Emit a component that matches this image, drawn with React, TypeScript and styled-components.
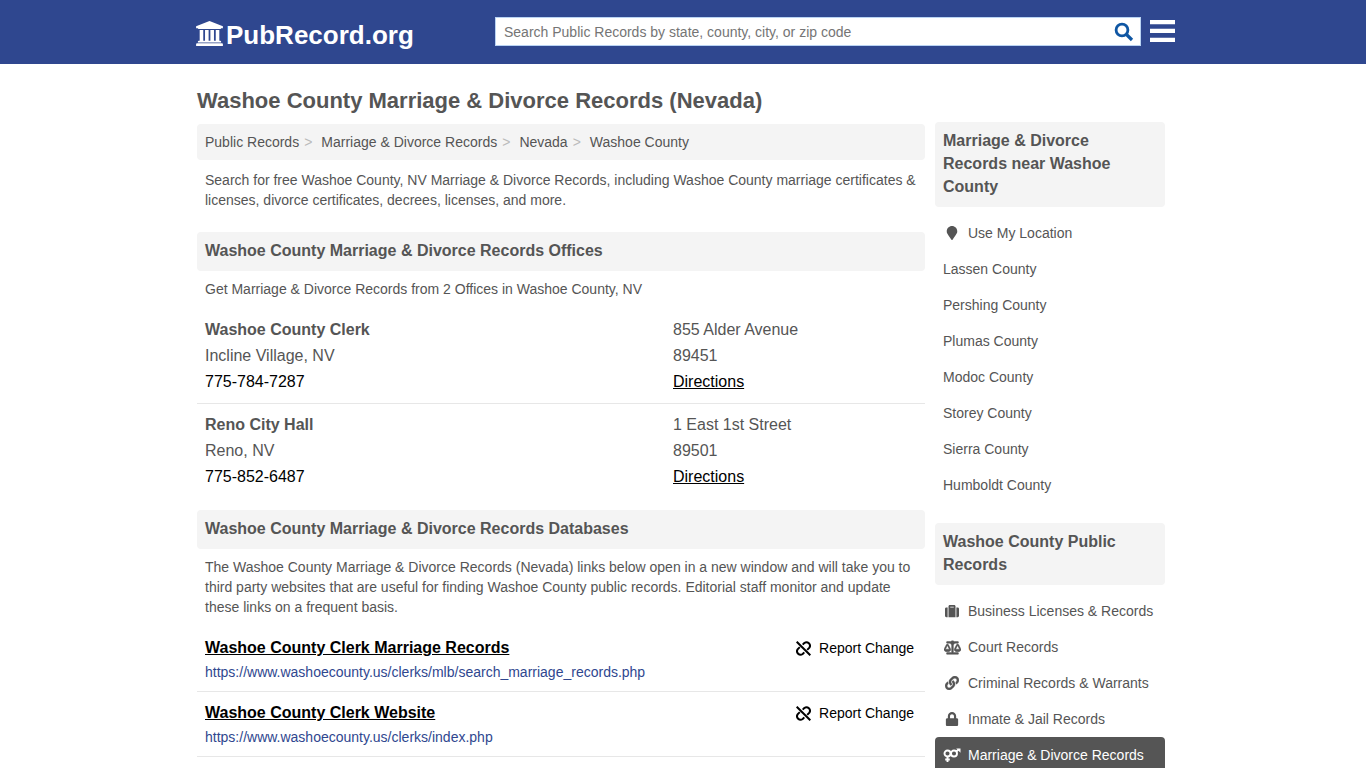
import React from "react";
import styled, { createGlobalStyle } from "styled-components";
import { FaBalanceScale, FaLink, FaLock, FaMapMarker, FaSuitcase } from "react-icons/fa";

const GlobalStyle = createGlobalStyle`
  *, *::before, *::after { box-sizing: border-box; }
  body {
    margin: 0;
    background: #fff;
    color: #555;
    font: 14px/20px "Liberation Sans", Arial, sans-serif;
  }
  h1, h2, h3, p, ul, ol { margin: 0; padding: 0; }
  ul, ol { list-style: none; }
  a { color: inherit; text-decoration: none; }
`;

const Header = styled.header`
  background: #2f478f;
`;

const HeaderInner = styled.div`
  display: flex;
  align-items: center;
  justify-content: space-between;
  max-width: 984px;
  height: 64px;
  margin: 0 auto;
  padding-left: 5px;
`;

const Logo = styled.a`
  display: flex;
  align-items: center;
  gap: 3px;
  padding-top: 6px;
  color: #fff;
  font-size: 26px;
  font-weight: bold;
  line-height: 32px;

  svg { margin-bottom: 4px; }
`;

const HeaderTools = styled.div`
  display: flex;
  align-items: center;
  flex: 0 1 680px;
  gap: 9px;
  padding-bottom: 2px;
`;

const SearchForm = styled.form`
  display: flex;
  flex: 1;
  height: 29px;
  background: #fff;
  border: 1px solid #b9d3f3;
`;

const SearchInput = styled.input`
  flex: 1;
  min-width: 0;
  padding: 2px 8px 0;
  border: 0;
  outline: 0;
  background: transparent;
  color: #555;
  font: inherit;

  &::placeholder { color: #757575; opacity: 1; }
`;

const IconButton = styled.button<{ $color: string }>`
  display: flex;
  align-items: center;
  padding: 0;
  border: 0;
  background: transparent;
  color: ${({ $color }) => $color};
  cursor: pointer;
`;

const SearchButton = styled(IconButton)`
  padding: 2px 6px 0;
`;

const Page = styled.div`
  display: flex;
  align-items: flex-start;
  gap: 10px;
  max-width: 972px;
  margin: 0 auto;
  padding: 22px 4px 0 0;
`;

const Main = styled.main`
  flex: 1;
  min-width: 0;
`;

const Sidebar = styled.aside`
  flex: 0 0 230px;
  padding-top: 36px;
`;

const Title = styled.h1`
  font-size: 22px;
  line-height: 30px;
  padding-bottom: 8px;
`;

const Breadcrumbs = styled.ol`
  display: flex;
  padding: 8px;
  border-radius: 4px;
  background: #f4f4f4;
`;

const Crumb = styled.li`
  & + &::before {
    content: ">";
    padding: 0 9px 0 5px;
    color: #bbb;
  }
`;

const Text = styled.p`
  padding: 8px 8px 10px;
`;

const Intro = styled(Text)`
  padding: 10px 8px 22px;
`;

const SectionTitle = styled.h2`
  padding: 8px 8px 10px;
  border-radius: 4px;
  background: #f4f4f4;
  font-size: 16px;
  line-height: 21px;
`;

const Section = styled.section`
  & + & { margin-top: 12px; }
`;

const Office = styled.li`
  display: grid;
  grid-template-columns: 1fr 244px;
  padding: 8px;
  border-bottom: 1px solid #e7e7e7;
  font-size: 16px;
  line-height: 26px;

  &:last-child { border-bottom: 0; }
`;

const OfficeColumn = styled.div`
  display: flex;
  flex-direction: column;
  align-items: flex-start;
`;

const OfficeName = styled.h3`
  font-size: 16px;
`;

const DarkLink = styled.a<{ $underline?: boolean }>`
  color: #000;
  text-decoration: ${({ $underline }) => ($underline ? "underline" : "none")};
`;

const Database = styled.li`
  display: flex;
  justify-content: space-between;
  padding: 8px 11px 6px 8px;
  border-bottom: 1px solid #e7e7e7;
  line-height: 25px;
`;

const DatabaseName = styled.h3`
  font-size: 16px;
  line-height: 25px;
`;

const DatabaseUrl = styled.a`
  color: #2f478f;
`;

const ReportLink = styled.a`
  display: flex;
  align-items: center;
  align-self: flex-start;
  gap: 8px;
  padding-top: 1px;
  color: #000;
`;

const SideSection = styled.section`
  & + & { margin-top: 20px; }
`;

const SideTitle = styled.h2`
  padding: 7px 8px 9px;
  border-radius: 4px;
  background: #f4f4f4;
  font-size: 16px;
  line-height: 23px;
`;

const SideList = styled.ul`
  padding-top: 8px;
`;

const SideLink = styled.a<{ $active?: boolean }>`
  display: flex;
  align-items: center;
  gap: 7px;
  padding: 8px;
  border-radius: 4px;
  background: ${({ $active }) => ($active ? "#555" : "transparent")};
  color: ${({ $active }) => ($active ? "#fff" : "inherit")};
`;

const SideIcon = styled.span`
  display: flex;
  justify-content: center;
  flex: 0 0 18px;
`;

const BankIcon = () => (
  <svg width="27" height="25" viewBox="0 0 1920 1792" fill="currentColor" aria-hidden="true">
    <path d="M960 0l960 384v128h-128q0 26-20.500 45t-48.500 19h-1526q-28 0-48.500-19t-20.500-45h-128v-128zM256 640h256v768h128v-768h256v768h128v-768h256v768h128v-768h256v768h59q28 0 48.500 19t20.500 45v64h-1664v-64q0-26 20.500-45t48.500-19h59v-768zM1851 1600q28 0 48.500 19t20.500 45v128h-1920v-128q0-26 20.500-45t48.500-19h1782z" />
  </svg>
);

const SearchIcon = () => (
  <svg width="20" height="20" viewBox="0 0 20 20" fill="none" stroke="currentColor" strokeWidth="2.8" aria-hidden="true">
    <circle cx="8" cy="8" r="5.9" />
    <path d="M12 12l6 6" strokeWidth="3.2" />
  </svg>
);

const MenuIcon = () => (
  <svg width="25" height="22" viewBox="0 0 25 22" fill="currentColor" aria-hidden="true">
    <path d="M0 0h25v4.300H0zM0 8.800h25v4.300H0zM0 17.700h25v4.300H0z" />
  </svg>
);

const BrokenLinkIcon = () => (
  <svg width="15" height="15" viewBox="0 0 15 15" fill="none" stroke="currentColor" strokeWidth="2" aria-hidden="true">
    <path d="M0.700 0.700L14.300 14.300" />
    <path d="M6.700 3.600L8.300 2A3.500 3.500 0 0 1 13.200 6.900L11.200 8.900M8.300 11.400L6.700 13A3.500 3.500 0 0 1 1.800 8.100L3.800 6.100" />
  </svg>
);

const VenusMarsIcon = () => (
  <svg width="18" height="15" viewBox="0 0 18 15" fill="none" stroke="currentColor" strokeWidth="1.900" aria-hidden="true">
    <circle cx="4.500" cy="5.500" r="3" />
    <circle cx="11" cy="5.500" r="3" />
    <path d="M4.500 8.500V14M2.200 11.500h4.600M13.100 3.400L16 1.500" />
    <path d="M13.200 0.400H17.500V4.700z" fill="currentColor" stroke="none" />
  </svg>
);

const crumbs = ["Public Records", "Marriage & Divorce Records", "Nevada", "Washoe County"];

const offices = [
  { name: "Washoe County Clerk", city: "Incline Village, NV", phone: "775-784-7287", street: "855 Alder Avenue", zip: "89451" },
  { name: "Reno City Hall", city: "Reno, NV", phone: "775-852-6487", street: "1 East 1st Street", zip: "89501" },
];

const databases = [
  { name: "Washoe County Clerk Marriage Records", url: "https://www.washoecounty.us/clerks/mlb/search_marriage_records.php" },
  { name: "Washoe County Clerk Website", url: "https://www.washoecounty.us/clerks/index.php" },
];

interface SideItem {
  label: string;
  icon?: React.ReactNode;
  active?: boolean;
}

const nearby: SideItem[] = [
  { label: "Use My Location", icon: <FaMapMarker size={14} /> },
  { label: "Lassen County" },
  { label: "Pershing County" },
  { label: "Plumas County" },
  { label: "Modoc County" },
  { label: "Storey County" },
  { label: "Sierra County" },
  { label: "Humboldt County" },
];

const records: SideItem[] = [
  { label: "Business Licenses & Records", icon: <FaSuitcase size={14} /> },
  { label: "Court Records", icon: <FaBalanceScale size={17} stroke="currentColor" strokeWidth={18} /> },
  { label: "Criminal Records & Warrants", icon: <FaLink size={14} stroke="currentColor" strokeWidth={12} /> },
  { label: "Inmate & Jail Records", icon: <FaLock size={14} /> },
  { label: "Marriage & Divorce Records", icon: <VenusMarsIcon />, active: true },
];

const SideNav = ({ title, items }: { title: string; items: SideItem[] }) => (
  <SideSection>
    <SideTitle>{title}</SideTitle>
    <SideList>
      {items.map(({ label, icon, active }) => (
        <li key={label}>
          <SideLink href="#" $active={active}>
            {icon && <SideIcon>{icon}</SideIcon>}
            {label}
          </SideLink>
        </li>
      ))}
    </SideList>
  </SideSection>
);

export default function App() {
  return (
    <>
      <GlobalStyle />
      <Header>
        <HeaderInner>
          <Logo href="#">
            <BankIcon />
            PubRecord.org
          </Logo>
          <HeaderTools>
            <SearchForm role="search">
              <SearchInput
                type="text"
                aria-label="Search Public Records"
                placeholder="Search Public Records by state, county, city, or zip code"
              />
              <SearchButton type="submit" aria-label="Search" $color="#0f56a3">
                <SearchIcon />
              </SearchButton>
            </SearchForm>
            <IconButton type="button" aria-label="Menu" $color="#fff">
              <MenuIcon />
            </IconButton>
          </HeaderTools>
        </HeaderInner>
      </Header>
      <Page>
        <Main>
          <Title>Washoe County Marriage &amp; Divorce Records (Nevada)</Title>
          <nav aria-label="Breadcrumb">
            <Breadcrumbs>
              {crumbs.map((crumb) => (
                <Crumb key={crumb}><a href="#">{crumb}</a></Crumb>
              ))}
            </Breadcrumbs>
          </nav>
          <Intro>
            Search for free Washoe County, NV Marriage &amp; Divorce Records, including Washoe County marriage
            certificates &amp; licenses, divorce certificates, decrees, licenses, and more.
          </Intro>
          <Section>
            <SectionTitle>Washoe County Marriage &amp; Divorce Records Offices</SectionTitle>
            <Text>Get Marriage &amp; Divorce Records from 2 Offices in Washoe County, NV</Text>
            <ul>
              {offices.map((office) => (
                <Office key={office.name}>
                  <OfficeColumn>
                    <OfficeName>{office.name}</OfficeName>
                    <span>{office.city}</span>
                    <DarkLink href={`tel:${office.phone}`}>{office.phone}</DarkLink>
                  </OfficeColumn>
                  <OfficeColumn>
                    <span>{office.street}</span>
                    <span>{office.zip}</span>
                    <DarkLink href="#" $underline>Directions</DarkLink>
                  </OfficeColumn>
                </Office>
              ))}
            </ul>
          </Section>
          <Section>
            <SectionTitle>Washoe County Marriage &amp; Divorce Records Databases</SectionTitle>
            <Text>
              The Washoe County Marriage &amp; Divorce Records (Nevada) links below open in a new window and will take
              you to third party websites that are useful for finding Washoe County public records. Editorial staff
              monitor and update these links on a frequent basis.
            </Text>
            <ul>
              {databases.map((database) => (
                <Database key={database.name}>
                  <div>
                    <DatabaseName>
                      <DarkLink href={database.url} $underline>{database.name}</DarkLink>
                    </DatabaseName>
                    <DatabaseUrl href={database.url}>{database.url}</DatabaseUrl>
                  </div>
                  <ReportLink href="#">
                    <BrokenLinkIcon />
                    Report Change
                  </ReportLink>
                </Database>
              ))}
            </ul>
          </Section>
        </Main>
        <Sidebar>
          <SideNav title="Marriage & Divorce Records near Washoe County" items={nearby} />
          <SideNav title="Washoe County Public Records" items={records} />
        </Sidebar>
      </Page>
    </>
  );
}
